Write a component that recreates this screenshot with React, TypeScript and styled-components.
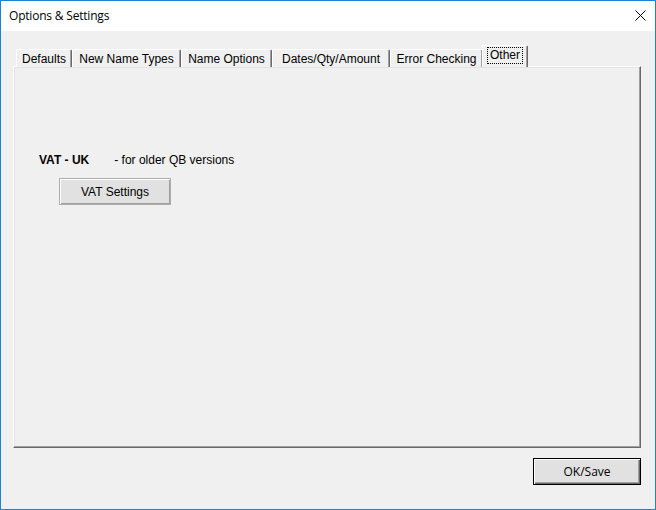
import styled, { createGlobalStyle } from "styled-components";

const GlobalStyle = createGlobalStyle`
  html, body {
    margin: 0;
    padding: 0;
    background: #f0f0f0;
  }
  * {
    box-sizing: border-box;
  }
`;

const Window = styled.div`
  width: 656px;
  height: 510px;
  border: 1px solid #1883d7;
  background: #f0f0f0;
  display: flex;
  flex-direction: column;
  font-family: "Liberation Sans", Arial, sans-serif;
  font-size: 12px;
  color: #000;
  overflow: hidden;
`;

const TitleBar = styled.div`
  height: 30px;
  flex: none;
  background: #fff;
  display: flex;
  align-items: center;
  justify-content: space-between;
  padding: 0 9px 0 8px;
`;

const Title = styled.span`
  font-family: "Open Sans", "Noto Sans", sans-serif;
  font-size: 12px;
  letter-spacing: -0.2px;
  margin-top: -1px;
`;

const CloseButton = styled.button`
  width: 12px;
  height: 12px;
  padding: 0;
  border: 0;
  background: transparent;
  display: flex;
  align-items: center;
  justify-content: center;
  margin-top: -1px;
`;

const Body = styled.div`
  flex: 1;
  display: flex;
  flex-direction: column;
  padding: 15px 14px 0 12px;
`;

const TabStrip = styled.div`
  display: flex;
  align-items: flex-end;
  height: 21px;
  padding-left: 3px;
  position: relative;
  z-index: 1;
  margin-bottom: -1px;
`;

const Tab = styled.div<{ $width: number; $active?: boolean }>`
  width: ${(p) => p.$width}px;
  height: ${(p) => (p.$active ? 22 : 18)}px;
  margin: ${(p) => (p.$active ? "0 -1px 0 -1px" : "0")};
  background: #f0f0f0;
  border-top: 1px solid #fff;
  border-left: 1px solid #fff;
  border-right: 1px solid #696969;
  box-shadow: inset -1px 0 0 #a0a0a0;
  border-radius: 2px 2px 0 0;
  display: flex;
  align-items: flex-start;
  justify-content: center;
  padding-top: ${(p) => (p.$active ? 1 : 2)}px;
  white-space: nowrap;
  position: relative;
  z-index: ${(p) => (p.$active ? 2 : 1)};
`;

const TabLabel = styled.span<{ $focused?: boolean }>`
  padding: ${(p) => (p.$focused ? "1px 3px 2px" : "0 1px")};
  line-height: 14px;
  outline: ${(p) => (p.$focused ? "1px dotted #000" : "none")};
  outline-offset: -1px;
`;

const Panel = styled.div`
  height: 382px;
  border-top: 1px solid #fff;
  border-left: 1px solid #fff;
  border-right: 1px solid #696969;
  border-bottom: 1px solid #696969;
  box-shadow: inset -1px -1px 0 #a0a0a0, inset 1px 1px 0 #e3e3e3;
  padding: 86px 0 0 25px;
`;

const InfoRow = styled.div`
  display: flex;
  align-items: baseline;
  gap: 25px;
  height: 16px;
  margin-bottom: 9px;
`;

const Strong = styled.span`
  font-weight: bold;
`;

const ClassicButton = styled.button<{ $default?: boolean; $width: number }>`
  width: ${(p) => p.$width}px;
  height: 27px;
  font-family: ${(p) =>
    p.$default
      ? `"Open Sans", "Noto Sans", sans-serif`
      : `"Liberation Sans", Arial, sans-serif`};
  font-size: 12px;
  color: #000;
  background: #e1e1e1;
  border: 1px solid ${(p) => (p.$default ? "#000" : "#adadad")};
  box-shadow: ${(p) =>
    p.$default
      ? "inset 1px 1px 0 #fff, inset -1px -1px 0 #696969, inset -2px -2px 0 #a0a0a0"
      : "inset 1px 1px 0 #fff, inset -1px -1px 0 #a0a0a0"};
  padding: 0;
`;

const SettingsButton = styled(ClassicButton)`
  margin-left: 20px;
`;

const Footer = styled.div`
  display: flex;
  justify-content: flex-end;
  padding: 10px 0 0 0;
`;

const tabs = [
  { label: "Defaults", width: 56 },
  { label: "New Name Types", width: 109 },
  { label: "Name Options", width: 91 },
  { label: "Dates/Qty/Amount", width: 118 },
  { label: "Error Checking", width: 93 },
  { label: "Other", width: 46, active: true },
];

export default function App() {
  return (
    <>
      <GlobalStyle />
      <Window>
        <TitleBar>
          <Title>Options &amp; Settings</Title>
          <CloseButton aria-label="Close">
            <svg width="11" height="11" viewBox="0 0 11 11">
              <path d="M0.5 0.5 L10.5 10.5 M10.5 0.5 L0.5 10.5" stroke="#000" strokeWidth="1" />
            </svg>
          </CloseButton>
        </TitleBar>
        <Body>
          <TabStrip>
            {tabs.map((t) => (
              <Tab key={t.label} $width={t.width} $active={t.active}>
                <TabLabel $focused={t.active}>{t.label}</TabLabel>
              </Tab>
            ))}
          </TabStrip>
          <Panel>
            <InfoRow>
              <Strong>VAT - UK</Strong>
              <span>- for older QB versions</span>
            </InfoRow>
            <SettingsButton $width={112}>VAT Settings</SettingsButton>
          </Panel>
          <Footer>
            <ClassicButton $default $width={108}>OK/Save</ClassicButton>
          </Footer>
        </Body>
      </Window>
    </>
  );
}
